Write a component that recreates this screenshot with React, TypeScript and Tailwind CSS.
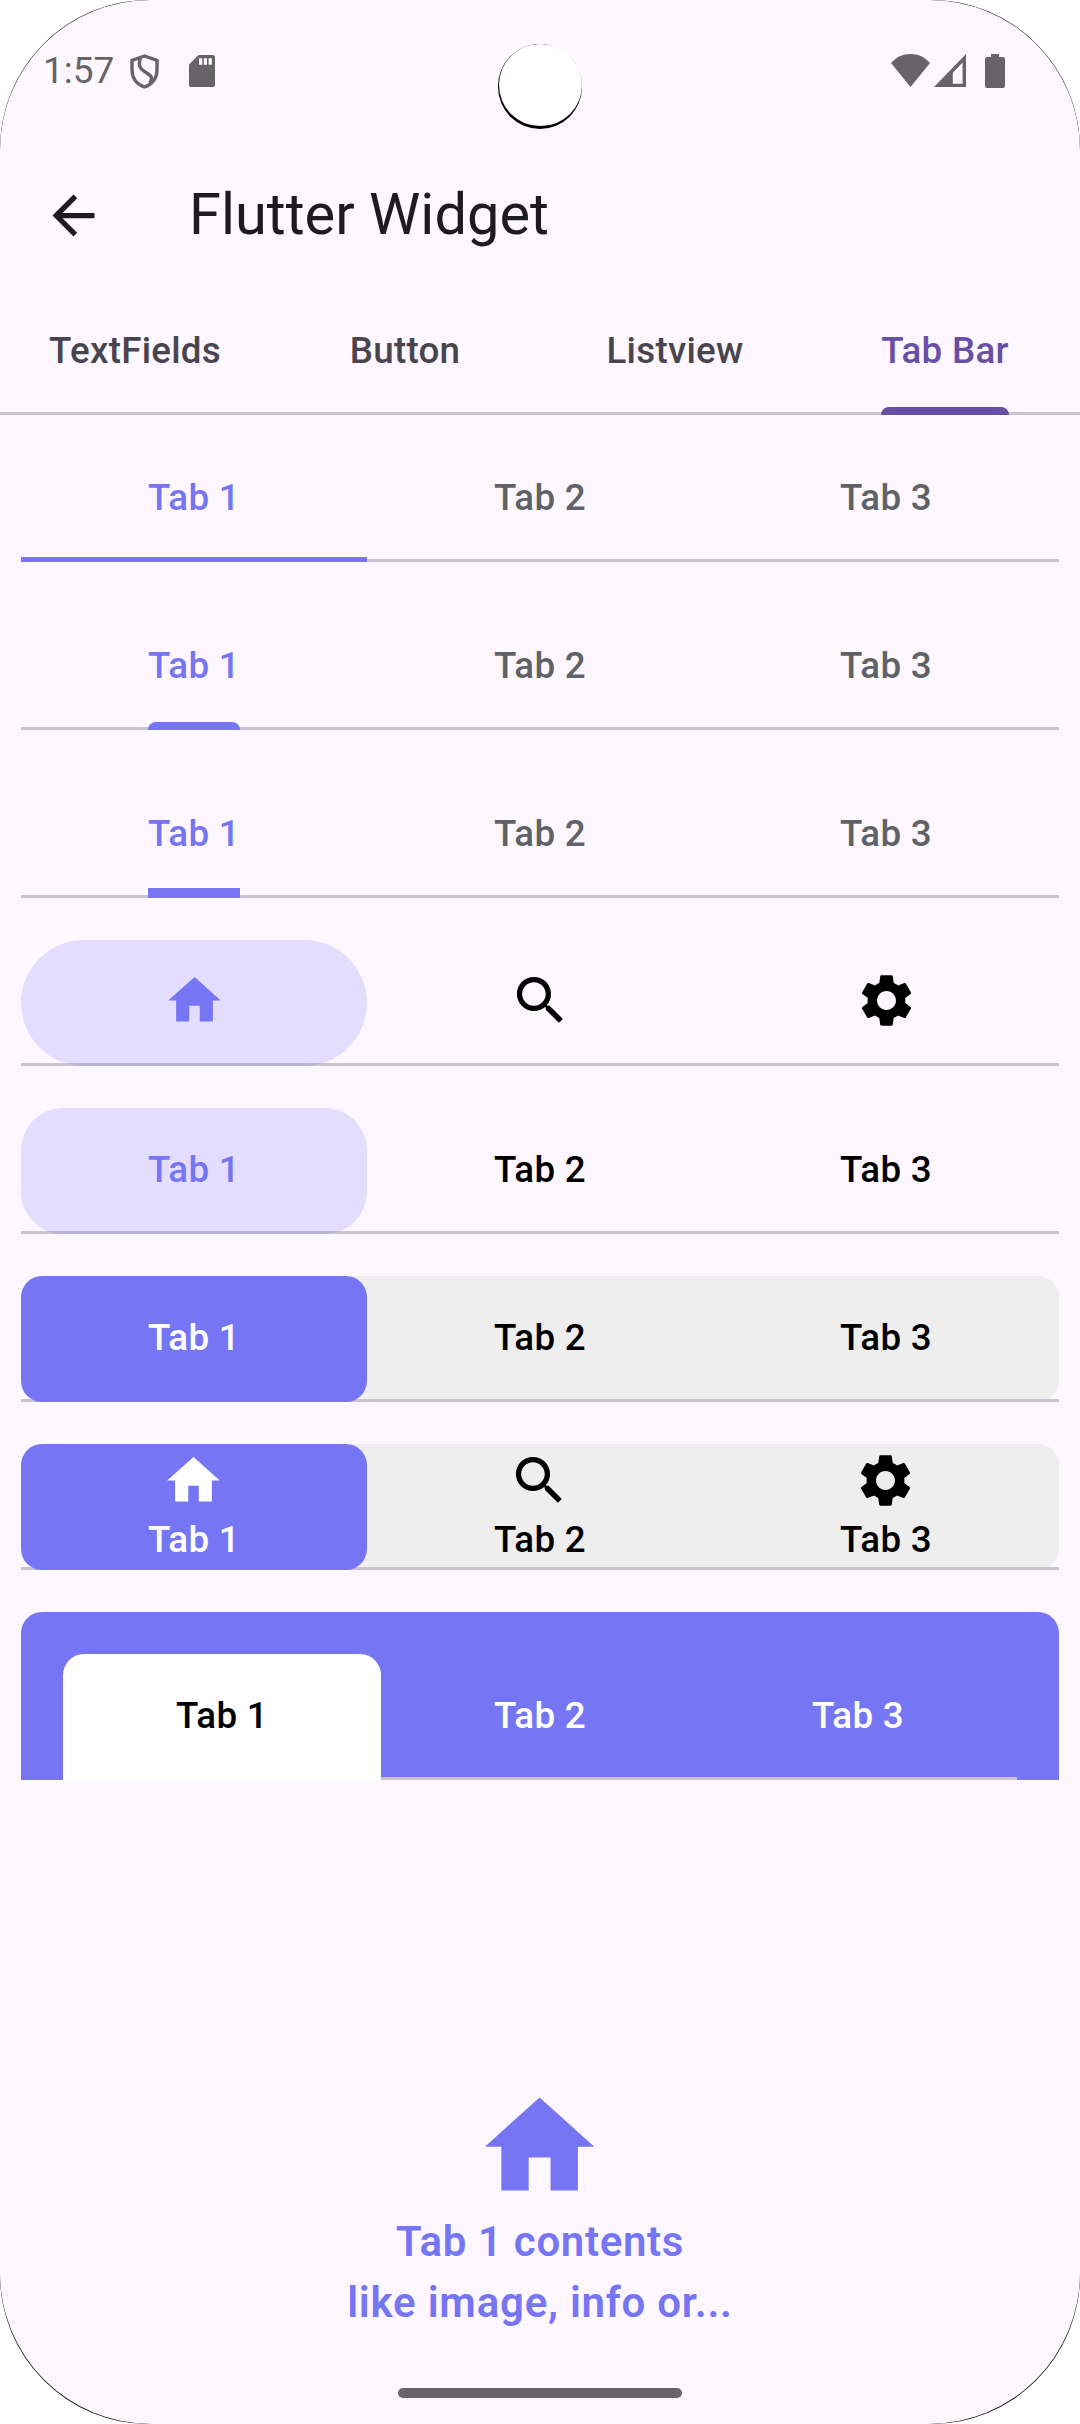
import type { ReactNode } from "react";

type IconProps = { className?: string };

const HomeIcon = ({ className = "size-[63px]" }: IconProps) => (
  <svg viewBox="0 0 24 24" fill="currentColor" className={className}>
    <path d="M10 20v-6h4v6h5v-8h3L12 3 2 12h3v8z" />
  </svg>
);

const SearchIcon = ({ className = "size-[63px]" }: IconProps) => (
  <svg viewBox="0 0 24 24" fill="currentColor" className={className}>
    <path d="M15.5 14h-.79l-.28-.27A6.471 6.471 0 0 0 16 9.5 6.5 6.5 0 1 0 9.5 16c1.61 0 3.09-.59 4.23-1.57l.27.28v.79l5 4.99L20.49 19l-4.99-5zm-6 0C7.01 14 5 11.99 5 9.5S7.01 5 9.5 5 14 7.01 14 9.5 11.99 14 9.5 14z" />
  </svg>
);

const SettingsIcon = ({ className = "size-[63px]" }: IconProps) => (
  <svg viewBox="0 0 24 24" fill="currentColor" className={className}>
    <path d="M19.14 12.94c.04-.3.06-.61.06-.94 0-.32-.02-.64-.07-.94l2.03-1.58a.49.49 0 0 0 .12-.61l-1.92-3.32a.488.488 0 0 0-.59-.22l-2.39.96c-.5-.38-1.03-.7-1.62-.94l-.36-2.54a.484.484 0 0 0-.48-.41h-3.84c-.24 0-.43.17-.47.41l-.36 2.54c-.59.24-1.13.57-1.62.94l-2.39-.96c-.22-.08-.47 0-.59.22L2.74 8.87c-.12.21-.08.47.12.61l2.03 1.58c-.05.3-.09.63-.09.94s.02.64.07.94l-2.03 1.58a.49.49 0 0 0-.12.61l1.92 3.32c.12.22.37.29.59.22l2.39-.96c.5.38 1.03.7 1.62.94l.36 2.54c.05.24.24.41.48.41h3.84c.24 0 .44-.17.47-.41l.36-2.54c.59-.24 1.13-.56 1.62-.94l2.39.96c.22.08.47 0 .59-.22l1.92-3.32c.12-.22.07-.47-.12-.61l-2.01-1.58zM12 15.6c-1.98 0-3.6-1.62-3.6-3.6s1.62-3.6 3.6-3.6 3.6 1.62 3.6 3.6-1.62 3.6-3.6 3.6z" />
  </svg>
);

const icons = [HomeIcon, SearchIcon, SettingsIcon];
const labels = ["Tab 1", "Tab 2", "Tab 3"];

function StatusBar() {
  return (
    <div className="relative flex h-[142px] items-start justify-between pr-[75px] pl-[43px] text-[#676468]">
      <div className="flex items-start">
        <span className="mt-[49px] w-[87px] text-[37px] leading-[43px]">1:57</span>
        <svg viewBox="0 0 29 35" className="mt-[54px] h-[35px] w-[29px]" fill="none" stroke="currentColor" strokeWidth="3.4">
          <path d="M14.5 2 27 6.4V16c0 8.400-5 14.500-12.500 17C7 30.500 2 24.400 2 16V6.400z" strokeLinejoin="round" />
          <path d="M10.500 3.500C9 9 8.600 12 11.500 15.200c2.800 3 8.600 4.600 9.800 8 .8 2.400-.5 4-1.500 5.800" />
        </svg>
        <svg viewBox="0 0 26 32" className="mt-[55px] ml-[30px] h-[32px] w-[26px]" fill="currentColor">
          <path d="M9.500 0H24a2 2 0 0 1 2 2v28a2 2 0 0 1-2 2H2a2 2 0 0 1-2-2V9.500z" />
          <path fill="#fff" d="M10 3.300h3.200v6.400H10zM14.800 3.300H18v6.400h-3.200zM19.600 3.300h3.200v6.400h-3.200z" />
        </svg>
      </div>
      <div className="flex items-start pt-[54px]">
        <svg viewBox="0 0 39 33" className="h-[33px] w-[39px]" fill="currentColor">
          <path d="M19.500 33 0 9C5 3.200 12 0 19.500 0S34 3.200 39 9z" />
        </svg>
        <svg viewBox="0 0 32 33" className="ml-[4px] h-[33px] w-[32px]" fill="currentColor">
          <path fillRule="evenodd" d="M32 0v33H0zM28.600 8.500 18.800 18.800v10.900h9.800z" />
        </svg>
        <svg viewBox="0 0 20 34" className="ml-[19px] h-[34px] w-[20px]" fill="currentColor">
          <path d="M6 0h8v3h4a2 2 0 0 1 2 2v27a2 2 0 0 1-2 2H2a2 2 0 0 1-2-2V5a2 2 0 0 1 2-2h4z" />
        </svg>
      </div>
      {/* Camera cut-out */}
      <div className="absolute top-[44px] left-[497.500px] size-[84.500px] rounded-full bg-black">
        <div className="mt-[-0.500px] ml-[1.500px] size-[82.500px] rounded-full bg-white" />
      </div>
    </div>
  );
}

function AppBar() {
  return (
    <div className="flex h-[147px] items-center pl-[42px] text-[#1d1b20]">
      <svg viewBox="0 0 24 24" fill="currentColor" className="size-[63px]">
        <path d="M20 11H7.830l5.590-5.590L12 4l-8 8 8 8 1.410-1.410L7.830 13H20v-2z" />
      </svg>
      <h1 className="mb-[2px] ml-[84px] text-[57.750px] leading-[73px]">Flutter Widget</h1>
    </div>
  );
}

function MainTabs() {
  return (
    <div className="grid h-[126px] grid-cols-4 border-b-[3px] border-[#cac4d0] text-[#49454f]">
      {["TextFields", "Button", "Listview"].map((t) => (
        <div key={t} className="flex justify-center pt-[36px]">
          {t}
        </div>
      ))}
      <div className="flex justify-center text-[#6750a4]">
        <div className="-mb-[3px] flex flex-col justify-between pt-[36px]">
          Tab Bar
          <span className="h-[8px] rounded-t-[7.900px] bg-[#6750a4]" />
        </div>
      </div>
    </div>
  );
}

type TabRowProps = {
  row?: string;
  idle: string;
  active: string;
  indicator?: string;
  underline?: string;
  icon?: boolean;
  text?: boolean;
};

/* Three equal tabs over a divider; the first tab is selected. */
function TabRow({ row = "", idle, active, indicator = "", underline, icon = false, text = true }: TabRowProps) {
  return (
    <div className={`h-[126px] ${row}`}>
      <div className={`grid h-[126px] grid-cols-3 border-b-[3px] border-[#cac4d0] ${idle}`}>
        {labels.map((label, i) => {
          const Icon = icons[i];
          const selected = i === 0;
          let body: ReactNode = label;
          if (icon && text) {
            body = (
              <div className="flex flex-col items-center pt-[5px]">
                <Icon />
                <span className="mt-[2px]">{label}</span>
              </div>
            );
          } else if (icon) {
            body = <Icon className="mt-[29px] size-[63px]" />;
          } else {
            body = (
              <div className="flex flex-col justify-between pt-[36px]">
                {label}
                {selected && underline && <span className={underline} />}
              </div>
            );
          }
          return (
            <div key={label} className={`flex justify-center ${selected ? `-mb-[3px] ${active} ${indicator}` : ""}`}>
              {body}
            </div>
          );
        })}
      </div>
    </div>
  );
}

export default function App() {
  return (
    <div className="h-[2424px] w-[1080px] overflow-hidden bg-white">
      <div className="h-full rounded-[149px] bg-black">
        <div className="flex h-full flex-col rounded-t-[150px] rounded-b-[151px] bg-[#fef7ff] font-[Roboto,sans-serif]">
          <StatusBar />
          <AppBar />
          <div className="flex grow flex-col text-[36.750px] leading-[52.500px] font-medium tracking-[0.260px]">
            <MainTabs />
            <div className="flex flex-col gap-[42px] px-[21px] pt-[21px]">
              <TabRow idle="text-[#5f6368]" active="text-[#7676f4]" indicator="bg-[linear-gradient(#7676f4,#7676f4)] bg-[length:100%_5px] bg-bottom bg-no-repeat" />
              <TabRow idle="text-[#5f6368]" active="text-[#7676f4]" underline="h-[8px] rounded-t-[7.900px] bg-[#7676f4]" />
              <TabRow idle="text-[#5f6368]" active="text-[#7676f4]" underline="h-[10px] bg-[#7676f4]" />
              <TabRow idle="text-black" active="text-[#7676f4]" indicator="rounded-[63px] bg-[#7676ff]/20" icon text={false} />
              <TabRow idle="text-black" active="text-[#7676f4]" indicator="rounded-[42px] bg-[#7676ff]/20" />
              <TabRow row="rounded-[21px] bg-[#eeeeee]" idle="text-black" active="text-white" indicator="rounded-[21px] bg-[#7676f4]" />
              <TabRow row="rounded-[21px] bg-[#eeeeee]" idle="text-black" active="text-white" indicator="rounded-[21px] bg-[#7676f4]" icon />
              <div className="rounded-t-[21px] bg-[#7676f4] px-[42px] pt-[42px]">
                <TabRow idle="text-white" active="text-black" indicator="rounded-t-[21px] bg-white" />
              </div>
            </div>
            <div className="mt-[301px] flex flex-col items-center text-center text-[42px] leading-[60.500px] font-semibold tracking-[0.660px] text-[#7676f4]">
              <HomeIcon className="size-[131.250px]" />
              <p>Tab 1 contents</p>
              <p className="tracking-[0.780px]">like image, info or...</p>
            </div>
            <div className="mt-auto mb-[26px] h-[10px] w-[284px] self-center rounded-full bg-[#676468]" />
          </div>
        </div>
      </div>
    </div>
  );
}
